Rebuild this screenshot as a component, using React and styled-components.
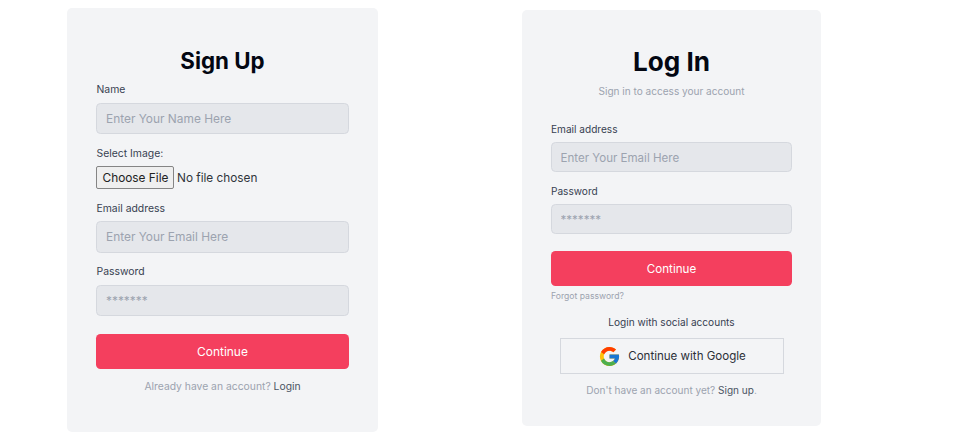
import React from 'react';
import styled, { createGlobalStyle } from 'styled-components';

const GlobalStyle = createGlobalStyle`
  * { box-sizing: border-box; }
  body {
    margin: 0;
    background: #fff;
    font-family: "Inter", sans-serif;
    color: #111827;
  }
`;

const Page = styled.main`
  display: flex;
  align-items: flex-start;
  gap: 144px;
  height: 434px;
  padding: 8px 0 0 67px;
  overflow: hidden;
`;

const Card = styled.section`
  display: flex;
  flex-direction: column;
  flex: none;
  width: ${(p) => p.$width}px;
  height: ${(p) => p.$height}px;
  margin-top: ${(p) => p.$offset || 0}px;
  padding: ${(p) => p.$padding};
  border-radius: 5px;
  background: #f3f4f6;
`;

const Title = styled.h1`
  margin: 0;
  font-size: ${(p) => p.$size}px;
  line-height: 32px;
  font-weight: ${(p) => p.$weight};
  text-align: center;
  color: #030712;
`;

const Subtitle = styled.p`
  margin: 5px 0 22px;
  font-size: 10.07px;
  line-height: 16px;
  text-align: center;
  color: #9ca3af;
`;

const Form = styled.form`
  display: flex;
  flex-direction: column;
`;

const Field = styled.div`
  display: flex;
  flex-direction: column;
  margin-top: ${(p) => p.$top || 0}px;
`;

const Label = styled.label`
  font-size: ${(p) => p.$size}px;
  line-height: 16px;
  margin-bottom: ${(p) => p.$gap}px;
  padding-left: ${(p) => p.$inset || 0}px;
  color: #374151;
`;

const Input = styled.input`
  display: block;
  width: 100%;
  height: ${(p) => p.$height}px;
  padding: ${(p) => p.$padding};
  border: 1px solid #d5d8de;
  border-radius: 4.5px;
  background: #e5e7eb;
  font: 400 ${(p) => p.$size}px "Inter", sans-serif;
  outline: none;
  &::placeholder { color: #9ca3af; opacity: 1; }
`;

const FileRow = styled.div`
  display: flex;
  align-items: center;
  gap: 3px;
  height: 23px;
  font-size: 11.8px;
  color: #30343b;
`;

const FileButton = styled.button`
  width: 78px;
  height: 23px;
  padding: 0 0 0 1px;
  border: 1px solid #858585;
  border-radius: 2px;
  background: #efefef;
  font: 400 11.85px "Inter", sans-serif;
  color: #222;
`;

const Submit = styled.button`
  width: 100%;
  height: ${(p) => p.$height}px;
  margin-top: ${(p) => p.$top}px;
  padding: 0;
  border: 0;
  border-radius: 4.5px;
  background: #f43f5e;
  font: 400 ${(p) => p.$size}px "Inter", sans-serif;
  color: #fff;
`;

const Forgot = styled.a`
  margin-top: 4px;
  font-size: 8.65px;
  line-height: 12px;
  color: #9ca3af;
`;

const SocialTitle = styled.p`
  margin: 12px 0 8px;
  font-size: 10.1px;
  line-height: 16px;
  text-align: center;
  color: #374151;
`;

const GoogleButton = styled.button`
  display: flex;
  align-items: center;
  justify-content: center;
  gap: 7px;
  height: 36px;
  margin: 0 8px 0 9px;
  padding: 0;
  border: 1px solid #d5d8de;
  background: transparent;
  font: 400 11.55px "Inter", sans-serif;
  color: #2b2f36;
`;

const Footer = styled.p`
  margin: ${(p) => p.$top}px 0 0;
  font-size: ${(p) => p.$size}px;
  line-height: 16px;
  text-align: center;
  color: #9ca3af;
`;

const FooterLink = styled.a`
  color: #4b5563;
`;

function GoogleIcon() {
  return (
    <svg width="23" height="23" viewBox="0 0 48 48" aria-hidden="true">
      <path fill="#FFC107" d="M43.611 20.083H42V20H24v8h11.303c-1.649 4.657-6.08 8-11.303 8-6.627 0-12-5.373-12-12s5.373-12 12-12c3.059 0 5.842 1.154 7.961 3.039l5.657-5.657C34.046 6.053 29.268 4 24 4 12.955 4 4 12.955 4 24s8.955 20 20 20 20-8.955 20-20c0-1.341-.138-2.65-.389-3.917z" />
      <path fill="#FF3D00" d="m6.306 14.691 6.571 4.819C14.655 15.108 18.961 12 24 12c3.059 0 5.842 1.154 7.961 3.039l5.657-5.657C34.046 6.053 29.268 4 24 4 16.318 4 9.656 8.337 6.306 14.691z" />
      <path fill="#4CAF50" d="M24 44c5.166 0 9.86-1.977 13.409-5.192l-6.19-5.238C29.211 35.091 26.715 36 24 36c-5.202 0-9.619-3.317-11.283-7.946l-6.522 5.025C9.505 39.556 16.227 44 24 44z" />
      <path fill="#1976D2" d="M43.611 20.083H42V20H24v8h11.303c-.792 2.237-2.231 4.166-4.087 5.571l6.193 5.238C36.971 39.205 44 34 44 24c0-1.341-.138-2.65-.389-3.917z" />
    </svg>
  );
}

function SignUpCard() {
  return (
    <Card $width={311} $height={424} $padding="37px 29px 0 29px">
      <Title $size={22.3} $weight={650}>Sign Up</Title>
      <Form>
        <Field $top={5}>
          <Label $size={10.4} $gap={5} $inset={0.5}>Name</Label>
          <Input $height={31} $size={11.9} $padding="0 9px" placeholder="Enter Your Name Here" />
        </Field>
        <Field $top={12}>
          <Label $size={10.4} $gap={4} $inset={0.5}>Select Image:</Label>
          <FileRow>
            <FileButton type="button">Choose File</FileButton>
            <span>No file chosen</span>
          </FileRow>
        </Field>
        <Field $top={12}>
          <Label $size={10.4} $gap={4} $inset={0.5}>Email address</Label>
          <Input $height={32} $size={11.9} $padding="0 9px 1px" placeholder="Enter Your Email Here" />
        </Field>
        <Field $top={11}>
          <Label $size={10.4} $gap={5} $inset={0.5}>Password</Label>
          <Input $height={31} $size={11.9} $padding="0 9px" type="password" placeholder="*******" />
        </Field>
        <Submit type="button" $top={18} $height={35} $size={11.95}>Continue</Submit>
      </Form>
      <Footer $top={9} $size={10.35}>
        Already have an account? <FooterLink>Login</FooterLink>
      </Footer>
    </Card>
  );
}

function LogInCard() {
  return (
    <Card $width={299} $height={416} $offset={2} $padding="36px 29px 0 29px">
      <Title $size={26.1} $weight={650}>Log In</Title>
      <Subtitle>Sign in to access your account</Subtitle>
      <Form>
        <Field>
          <Label $size={10.1} $gap={5}>Email address</Label>
          <Input $height={30} $size={11.55} $padding="1px 8.5px 0" placeholder="Enter Your Email Here" />
        </Field>
        <Field $top={11}>
          <Label $size={10.1} $gap={5}>Password</Label>
          <Input $height={30} $size={11.55} $padding="1px 8.5px 0" type="password" placeholder="*******" />
        </Field>
        <Submit type="button" $top={17} $height={35} $size={11.6}>Continue</Submit>
      </Form>
      <Forgot>Forgot password?</Forgot>
      <SocialTitle>Login with social accounts</SocialTitle>
      <GoogleButton type="button">
        <GoogleIcon />
        <span>Continue with Google</span>
      </GoogleButton>
      <Footer $top={8} $size={10.04}>
        Don't have an account yet? <FooterLink>Sign up</FooterLink>.
      </Footer>
    </Card>
  );
}

export default function App() {
  return (
    <>
      <GlobalStyle />
      <Page>
        <SignUpCard />
        <LogInCard />
      </Page>
    </>
  );
}
